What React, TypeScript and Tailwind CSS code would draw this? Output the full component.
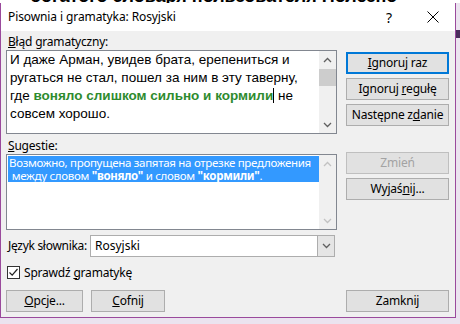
import clsx from 'clsx'

const ui = "font-['Noto_Sans',sans-serif]"

function Btn({ children, focus, disabled, className }: { children: React.ReactNode; focus?: boolean; disabled?: boolean; className?: string }) {
  return (
    <div
      className={clsx(
        'h-[22px] flex items-center justify-center text-[12px] leading-none tracking-[-0.2px]',
        focus ? 'border-2 border-[#0078d7] bg-[#e1e1e1]' : 'border border-[#adadad] bg-[#e1e1e1]',
        disabled && 'bg-[#cccccc] border-[#bfbfbf] text-[#a3a3a3]',
        !disabled && 'text-black',
        className
      )}
    >
      {children}
    </div>
  )
}

function Chevron({ up, light }: { up?: boolean; light?: boolean }) {
  return (
    <svg width="9" height="6" viewBox="0 0 9 6" className="block">
      <path
        d={up ? 'M1 5 L4.5 1.5 L8 5' : 'M1 1 L4.5 4.5 L8 1'}
        fill="none"
        stroke={light ? '#c2c2c2' : '#606060'}
        strokeWidth="1.3"
      />
    </svg>
  )
}

function ScrollBar({ disabled }: { disabled?: boolean }) {
  return (
    <div className="w-[17px] h-full bg-[#f0f0f0] flex flex-col items-center">
      <div className="h-[17px] flex items-center justify-center">
        <Chevron up light={disabled} />
      </div>
      {!disabled && <div className="mt-[1px] w-[17px] h-[17px] bg-[#cdcdcd]" />}
      <div className="flex-1" />
      <div className="h-[17px] flex items-center justify-center">
        <Chevron light={disabled} />
      </div>
    </div>
  )
}

export default function App() {
  return (
    <div className={clsx('w-[460px] h-[324px] bg-[#ebe3ef] overflow-hidden', ui)}>
      {/* bottom edge of the document text behind the dialog */}
      <svg width="460" height="3" className="block bg-white">
        <text x="30" y="2" fontSize="18" fontWeight="bold" fontFamily="Liberation Sans, sans-serif" fill="#000">
          богатого словаря пользователя   Полезно
        </text>
      </svg>
      <div className="flex">
        <div className="w-[456px] h-[315px] border-x border-b border-[#9a4a9c] bg-[#f0f0f0] flex flex-col">
          <div className="h-[28px] bg-white flex items-center pl-[7px] text-[12px] text-black tracking-[-0.1px]">
            <span>Pisownia i gramatyka: Rosyjski</span>
            <span className="ml-auto text-[14px] mr-[35px]">?</span>
            <svg width="12" height="12" viewBox="0 0 12 12" className="mr-[16px]">
              <path d="M0.5 0.5 L11.5 11.5 M11.5 0.5 L0.5 11.5" stroke="#000" strokeWidth="1" />
            </svg>
          </div>
          <div className="flex pl-[5px] pr-[5px] gap-[9px]">
            <div className="w-[331px] flex flex-col">
              <div className="mt-[3px] h-[16px] leading-[16px] text-[12px] pl-[2px] tracking-[-0.2px]">
                <span className="underline">B</span>łąd gramatyczny:
              </div>
              <div className="h-[84px] border border-[#828790] bg-white flex">
                <div className="flex-1 pl-[3px] text-[13.5px] leading-[18px] text-black font-['Liberation_Sans',sans-serif]">
                  И даже Арман, увидев брата, ерепениться и ругаться не стал, пошел за ним в эту таверну, где{' '}
                  <span className="font-bold text-[#2e8b2e]">воняло слишком сильно и кормили</span>
                  <span className="inline-block w-[1px] h-[15px] bg-black align-[-3px]" /> не совсем хорошо.
                </div>
                <ScrollBar />
              </div>
              <div className="mt-[4px] h-[16px] leading-[16px] text-[12px] pl-[2px] tracking-[-0.2px]">
                <span className="underline">S</span>ugestie:
              </div>
              <div className="h-[76px] border border-[#828790] bg-white flex">
                <div className="flex-1 pl-[1px] pt-[1px]">
                  <div className="bg-[#3399ff] text-white text-[11.5px] leading-[13px] tracking-[-0.3px] w-[311px]">
                    <div className="h-[13px] whitespace-nowrap pl-[1px]">Возможно, пропущена запятая на отрезке предложения</div>
                    <div className="h-[13px] whitespace-nowrap pl-[1px]">
                      &nbsp;между словом <b>"воняло"</b> и словом <b>"кормили"</b>.
                    </div>
                  </div>
                </div>
                <ScrollBar disabled />
              </div>
              <div className="mt-[5px] flex items-center h-[22px]">
                <div className="w-[84px] text-[12px] pl-[2px] whitespace-nowrap tracking-[-0.3px]">
                  <span className="underline">J</span>ęzyk słownika:
                </div>
                <div className="w-[245px] h-[22px] border border-[#adadad] bg-white flex items-center">
                  <span className="pl-[4px] text-[12px] flex-1">Rosyjski</span>
                  <div className="w-[17px] h-[20px] bg-[#e5e5e5] border-l border-[#adadad] flex items-center justify-center">
                    <Chevron />
                  </div>
                </div>
              </div>
              <div className="mt-[8px] flex items-center h-[15px] text-[12px] tracking-[-0.2px]">
                <div className="w-[13px] h-[13px] border border-[#333] bg-white flex items-center justify-center ml-[1px]">
                  <svg width="11" height="11" viewBox="0 0 11 11">
                    <path d="M1.5 5.5 L4.2 8.2 L9.5 2" fill="none" stroke="#222" strokeWidth="1.2" />
                  </svg>
                </div>
                <span className="ml-[4px]">
                  Sprawdź <span className="underline">g</span>ramatykę
                </span>
              </div>
              <div className="mt-[10px] flex gap-[8px]">
                <Btn className="w-[77px]">
                  <span><span className="underline">O</span>pcje...</span>
                </Btn>
                <Btn className="w-[74px]">
                  <span><span className="underline">C</span>ofnij</span>
                </Btn>
              </div>
            </div>
            <div className="w-[103px] flex flex-col pt-[21px]">
              <Btn focus>
                <span><span className="underline">I</span>gnoruj raz</span>
              </Btn>
              <Btn className="mt-[4px]">
                <span>Ignoruj <span className="underline">r</span>egułę</span>
              </Btn>
              <Btn className="mt-[4px]">
                <span>Następne z<span className="underline">d</span>anie</span>
              </Btn>
              <Btn disabled className="mt-[26px]">Zmień</Btn>
              <Btn className="mt-[4px]">
                <span>Wyjaś<span className="underline">n</span>ij...</span>
              </Btn>
              <div className="flex-1" />
              <Btn>Zamknij</Btn>
            </div>
          </div>
        </div>
        <div className="flex-1 flex flex-col">
          <div className="h-[27px]" />
          <div className="h-[8px] bg-[#4a2d5c]" />
          <div className="flex-1 bg-[#ebe3ef]" />
        </div>
      </div>
    </div>
  )
}
